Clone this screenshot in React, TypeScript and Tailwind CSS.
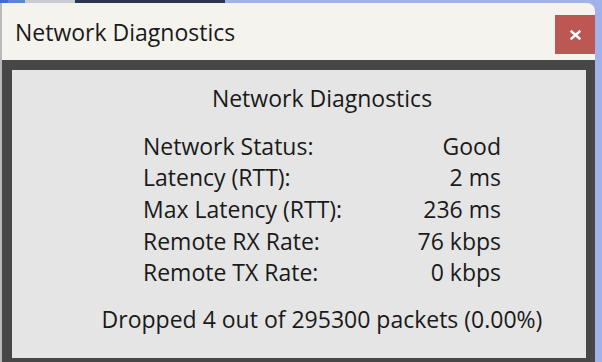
import React from "react";

const rows: [string, string][] = [
  ["Network Status:", "Good"],
  ["Latency (RTT):", "2 ms"],
  ["Max Latency (RTT):", "236 ms"],
  ["Remote RX Rate:", "76 kbps"],
  ["Remote TX Rate:", "0 kbps"],
];

export default function App() {
  return (
    <div
      className="w-[602px] h-[362px] overflow-hidden flex flex-col bg-[#a3b1ea] text-[#1a1a1a]"
      style={{ fontFamily: '"Open Sans", "Noto Sans", sans-serif' }}
    >
      {/* desktop strip on top */}
      <div className="h-[3px] flex shrink-0">
        <div className="w-[8px] bg-[#3d6fd1]" />
        <div className="w-[17px] bg-[#5a86d8]" />
        <div className="w-[50px] bg-[#c9ccd3]" />
        <div className="w-[150px] bg-[#2c3650]" />
        <div className="flex-1 bg-[#a3b1ea]" />
      </div>
      <div className="flex flex-1 min-h-0">
        <div className="w-[2px] bg-[#b9b9bb]" />
        {/* window */}
        <div className="w-[593px] flex flex-col">
          <div className="h-[57px] bg-[#f5f3ee] rounded-tr-[8px] flex items-start justify-between shrink-0">
            <div className="pl-[13px] pt-[14px] text-[23px] leading-[30px]">Network Diagnostics</div>
            <div className="mt-[12px] w-[40px] h-[39px] bg-[#bc5753] flex items-center justify-center">
              <svg width="11" height="10" viewBox="0 0 11 10">
                <path d="M1.5 1.5 L9.5 8.5 M9.5 1.5 L1.5 8.5" stroke="#ffffff" strokeWidth="2.4" strokeLinecap="square" />
              </svg>
            </div>
          </div>
          <div className="flex-1 bg-[#474747] pl-[10px] pt-[10px] pr-[9px] pb-[4px] flex">
            <div className="flex-1 bg-[#e5e5e5] pl-[46px] pt-[12px] flex flex-col items-center text-[23px]">
              <div className="leading-[32px]">Network Diagnostics</div>
              <div className="mt-[16.5px] w-[358px] flex flex-col">
                {rows.map(([k, v]) => (
                  <div key={k} className="flex justify-between leading-[31.7px] h-[31.7px]">
                    <span>{k}</span>
                    <span>{v}</span>
                  </div>
                ))}
              </div>
              <div className="mt-[14.5px] leading-[32px]">Dropped 4 out of 295300 packets (0.00%)</div>
            </div>
          </div>
        </div>
        <div className="flex-1 bg-[#a3b1ea]" />
      </div>
    </div>
  );
}
